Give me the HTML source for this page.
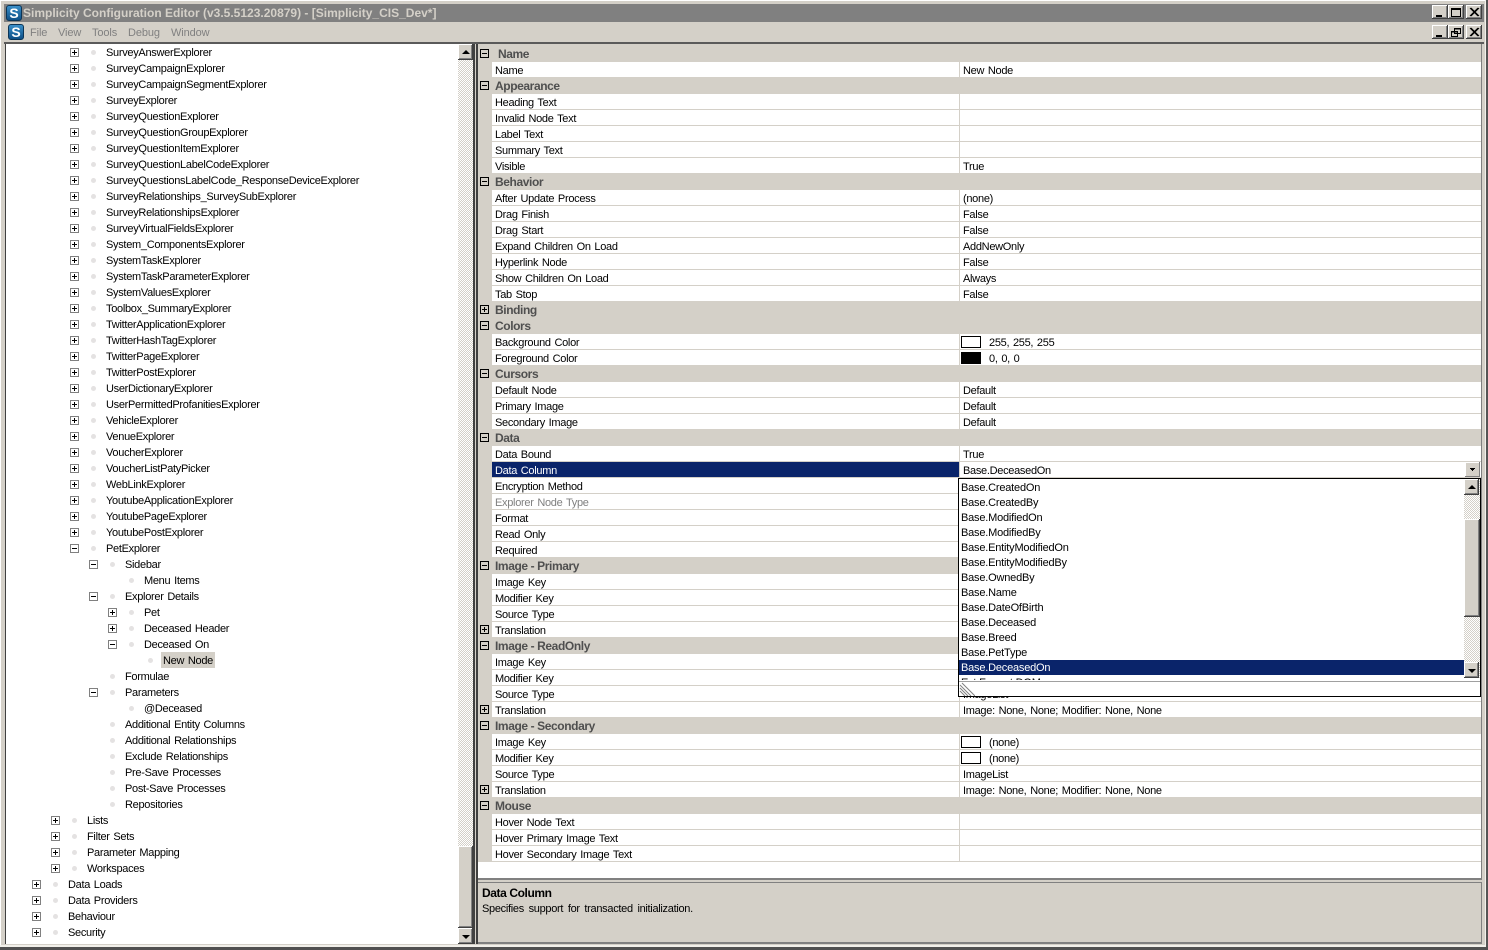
<!DOCTYPE html>
<html><head><meta charset="utf-8">
<style>
*{margin:0;padding:0;box-sizing:border-box}
html,body{width:1488px;height:950px;overflow:hidden;background:#d4d0c8;font:11px/16px "Liberation Sans",sans-serif;color:#000}
.a{position:absolute}
.btn{position:absolute;width:16px;height:14px;background:#d4d0c8;box-shadow:inset -1px -1px #404040,inset 1px 1px #fff,inset -2px -2px #808080}
.btn svg{position:absolute;left:0;top:0}
.logo{position:absolute;width:16px;height:16px;border-radius:3px;background:linear-gradient(#3a8fc8,#0d4f86);border:1px solid #0b3557;color:#fff;font:bold 14px/14px "Liberation Sans",sans-serif;text-align:center}
.menu{position:absolute;top:25px;color:#808080;letter-spacing:-.1px}
.t{height:16px;position:relative;white-space:nowrap;line-height:18px;letter-spacing:-.3px;word-spacing:1px}
.t i{position:absolute;top:4px;left:var(--x);width:9px;height:9px;border:1px solid #808080;background:linear-gradient(#000,#000) center/5px 1px no-repeat,#fff}
.t i.p{background:linear-gradient(#000,#000) center/5px 1px no-repeat,linear-gradient(#000,#000) center/1px 5px no-repeat,#fff}
.t b{position:absolute;top:6px;left:calc(var(--x) + 21px);width:5px;height:5px;border-radius:50%;background:#e4e2e2}
.l0{--x:32px;padding-left:68px}
.l1{--x:51px;padding-left:87px}
.l2{--x:70px;padding-left:106px}
.l3{--x:89px;padding-left:125px}
.l4{--x:108px;padding-left:144px}
.l5{--x:127px;padding-left:163px}
.sbtn{position:absolute;width:15px;height:16px;background:#d4d0c8;box-shadow:inset -1px -1px #404040,inset 1px 1px #fff,inset -2px -2px #808080}
.up:after,.dn:after{content:"";position:absolute;left:4px;border-left:4px solid transparent;border-right:4px solid transparent}
.up:after{top:6px;border-bottom:4px solid #000}
.dn:after{top:7px;border-top:4px solid #000}
.track{position:absolute;background:conic-gradient(#d4d0c8 25%,#fff 0 50%,#d4d0c8 0 75%,#fff 0) 0 0/2px 2px}
.thumb{position:absolute;width:15px;background:#d4d0c8;box-shadow:inset -1px -1px #404040,inset 1px 1px #fff,inset -2px -2px #808080}
.g p{height:16px;position:relative;white-space:nowrap;background:#d4d0c8;line-height:18px;letter-spacing:-.3px;word-spacing:1px}
.g p b,.g p em{position:absolute;top:0;height:16px;font-weight:normal;font-style:normal;background:#fff;border-bottom:1px solid #d4d0c8;overflow:hidden}
.g p b{left:14px;width:467px;padding-left:3px}
.g p em{left:482px;width:521px;padding-left:3px}
.g h4{height:16px;position:relative;font:bold 12px/16px "Liberation Sans",sans-serif;color:#4f4f4f;padding-left:17px;background:#d4d0c8;white-space:nowrap;letter-spacing:-.4px}
.g i{position:absolute;left:2px;top:3px;width:9px;height:9px;border:1px solid #000;background:linear-gradient(#000,#000) center/5px 1px no-repeat,#d4d0c8}
.g i.p{background:linear-gradient(#000,#000) center/5px 1px no-repeat,linear-gradient(#000,#000) center/1px 5px no-repeat,#d4d0c8}
.g p i{z-index:2}
.sw{position:absolute;left:1px;top:2px;width:20px;height:12px;border:1px solid #000;background:#fff}
.sv{padding-left:29px!important}
.dd div{height:15px;line-height:17px;padding-left:2px;white-space:nowrap;letter-spacing:-.2px}
</style></head><body>

<!-- window frame -->
<div class="a" style="left:0;top:0;width:1488px;height:3px;background:#d4d0c8;border-top:1px solid #fff"></div>
<div class="a" style="left:0;top:0;width:1px;height:950px;background:#fff"></div>
<div class="a" style="left:1486px;top:0;width:2px;height:950px;background:#555"></div>
<div class="a" style="left:1485px;top:0;width:1px;height:950px;background:#f2f0ea"></div>
<div class="a" style="left:0;top:947px;width:1488px;height:3px;background:#505050"></div>
<div class="a" style="left:0;top:945px;width:1486px;height:2px;background:#f2f0ea"></div>

<!-- title bar -->
<div class="a" style="left:4px;top:4px;width:1480px;height:18px;background:#808080"></div>
<div class="logo" style="left:6px;top:5px">S</div>
<div class="a" style="left:23px;top:5px;color:#d4d0c8;font-weight:bold;font-size:12px;line-height:17px;white-space:nowrap">Simplicity Configuration Editor (v3.5.5123.20879) - [Simplicity_CIS_Dev*]</div>
<div class="btn" style="left:1432px;top:5px"><svg width="16" height="14"><path d="M4 10h6v2H4z"/></svg></div>
<div class="btn" style="left:1448px;top:5px"><svg width="16" height="14"><path d="M3.5 3.5h9v8h-9z" fill="none" stroke="#000"/><path d="M3 3h10v2H3z"/></svg></div>
<div class="btn" style="left:1466px;top:5px"><svg width="16" height="14"><path d="M4 3l8 8M5 3l8 8M12 3l-8 8M13 3l-8 8" stroke="#000" stroke-width="1" fill="none"/></svg></div>

<!-- menu bar -->
<div class="logo" style="left:8px;top:24px">S</div>
<div class="menu" style="left:30px">File</div>
<div class="menu" style="left:58px">View</div>
<div class="menu" style="left:92px">Tools</div>
<div class="menu" style="left:128px">Debug</div>
<div class="menu" style="left:171px">Window</div>
<div class="btn" style="left:1432px;top:25px"><svg width="16" height="14"><path d="M4 10h6v2H4z"/></svg></div>
<div class="btn" style="left:1448px;top:25px"><svg width="16" height="14"><path d="M6.5 3.5h6v5h-6zM3.5 6.5h6v5h-6z" fill="#d4d0c8" stroke="#000"/><path d="M6 3h7v1.500H6zM3 6h7v1.500H3z"/></svg></div>
<div class="btn" style="left:1466px;top:25px"><svg width="16" height="14"><path d="M4 3l8 8M5 3l8 8M12 3l-8 8M13 3l-8 8" stroke="#000" stroke-width="1" fill="none"/></svg></div>
<div class="a" style="left:4px;top:42px;width:1480px;height:2px;background:#5a5a5a"></div>

<!-- tree -->
<div class="a" style="left:5px;top:44px;width:453px;height:900px;background:#fff;border-left:1px solid #404040"></div>
<div class="a" style="left:0;top:44px;width:458px;height:900px;overflow:hidden">
<div class="t l2"><i class="p"></i><b></b>SurveyAnswerExplorer</div>
<div class="t l2"><i class="p"></i><b></b>SurveyCampaignExplorer</div>
<div class="t l2"><i class="p"></i><b></b>SurveyCampaignSegmentExplorer</div>
<div class="t l2"><i class="p"></i><b></b>SurveyExplorer</div>
<div class="t l2"><i class="p"></i><b></b>SurveyQuestionExplorer</div>
<div class="t l2"><i class="p"></i><b></b>SurveyQuestionGroupExplorer</div>
<div class="t l2"><i class="p"></i><b></b>SurveyQuestionItemExplorer</div>
<div class="t l2"><i class="p"></i><b></b>SurveyQuestionLabelCodeExplorer</div>
<div class="t l2"><i class="p"></i><b></b>SurveyQuestionsLabelCode_ResponseDeviceExplorer</div>
<div class="t l2"><i class="p"></i><b></b>SurveyRelationships_SurveySubExplorer</div>
<div class="t l2"><i class="p"></i><b></b>SurveyRelationshipsExplorer</div>
<div class="t l2"><i class="p"></i><b></b>SurveyVirtualFieldsExplorer</div>
<div class="t l2"><i class="p"></i><b></b>System_ComponentsExplorer</div>
<div class="t l2"><i class="p"></i><b></b>SystemTaskExplorer</div>
<div class="t l2"><i class="p"></i><b></b>SystemTaskParameterExplorer</div>
<div class="t l2"><i class="p"></i><b></b>SystemValuesExplorer</div>
<div class="t l2"><i class="p"></i><b></b>Toolbox_SummaryExplorer</div>
<div class="t l2"><i class="p"></i><b></b>TwitterApplicationExplorer</div>
<div class="t l2"><i class="p"></i><b></b>TwitterHashTagExplorer</div>
<div class="t l2"><i class="p"></i><b></b>TwitterPageExplorer</div>
<div class="t l2"><i class="p"></i><b></b>TwitterPostExplorer</div>
<div class="t l2"><i class="p"></i><b></b>UserDictionaryExplorer</div>
<div class="t l2"><i class="p"></i><b></b>UserPermittedProfanitiesExplorer</div>
<div class="t l2"><i class="p"></i><b></b>VehicleExplorer</div>
<div class="t l2"><i class="p"></i><b></b>VenueExplorer</div>
<div class="t l2"><i class="p"></i><b></b>VoucherExplorer</div>
<div class="t l2"><i class="p"></i><b></b>VoucherListPatyPicker</div>
<div class="t l2"><i class="p"></i><b></b>WebLinkExplorer</div>
<div class="t l2"><i class="p"></i><b></b>YoutubeApplicationExplorer</div>
<div class="t l2"><i class="p"></i><b></b>YoutubePageExplorer</div>
<div class="t l2"><i class="p"></i><b></b>YoutubePostExplorer</div>
<div class="t l2"><i></i><b></b>PetExplorer</div>
<div class="t l3"><i></i><b></b>Sidebar</div>
<div class="t l4"><b></b>Menu Items</div>
<div class="t l3"><i></i><b></b>Explorer Details</div>
<div class="t l4"><i class="p"></i><b></b>Pet</div>
<div class="t l4"><i class="p"></i><b></b>Deceased Header</div>
<div class="t l4"><i></i><b></b>Deceased On</div>
<div class="t l5"><b></b><span style="background:#d4d0c8;margin-left:-2px;padding:0 2px;display:inline-block;height:16px">New Node</span></div>
<div class="t l3"><b></b>Formulae</div>
<div class="t l3"><i></i><b></b>Parameters</div>
<div class="t l4"><b></b>@Deceased</div>
<div class="t l3"><b></b>Additional Entity Columns</div>
<div class="t l3"><b></b>Additional Relationships</div>
<div class="t l3"><b></b>Exclude Relationships</div>
<div class="t l3"><b></b>Pre-Save Processes</div>
<div class="t l3"><b></b>Post-Save Processes</div>
<div class="t l3"><b></b>Repositories</div>
<div class="t l1"><i class="p"></i><b></b>Lists</div>
<div class="t l1"><i class="p"></i><b></b>Filter Sets</div>
<div class="t l1"><i class="p"></i><b></b>Parameter Mapping</div>
<div class="t l1"><i class="p"></i><b></b>Workspaces</div>
<div class="t l0"><i class="p"></i><b></b>Data Loads</div>
<div class="t l0"><i class="p"></i><b></b>Data Providers</div>
<div class="t l0"><i class="p"></i><b></b>Behaviour</div>
<div class="t l0"><i class="p"></i><b></b>Security</div>
</div>

<!-- tree scrollbar -->
<div class="track" style="left:458px;top:44px;width:15px;height:899px"></div>
<div class="sbtn up" style="left:458px;top:44px"></div>
<div class="thumb" style="left:458px;top:846px;height:82px"></div>
<div class="sbtn dn" style="left:458px;top:928px"></div>

<!-- splitter -->
<div class="a" style="left:473px;top:44px;width:2px;height:900px;background:#404040"></div>
<div class="a" style="left:476px;top:44px;width:2px;height:900px;background:#404040"></div>

<!-- property grid -->
<div class="a" style="left:478px;top:44px;width:1004px;height:836px;background:#fff;border-right:1px solid #808080;border-bottom:2px solid #808080"></div>
<div class="a" style="left:478px;top:44px;width:1003px;height:2px;background:#d4d0c8"></div>
<div class="a" style="left:478px;top:46px;width:14px;height:816px;background:#d4d0c8"></div>
<div class="a g" style="left:478px;top:46px;width:1003px">
<h4 style="padding-left:20px"><i></i>Name</h4>
<p><b>Name</b><em>New Node</em></p>
<h4><i></i>Appearance</h4>
<p><b>Heading Text</b><em></em></p>
<p><b>Invalid Node Text</b><em></em></p>
<p><b>Label Text</b><em></em></p>
<p><b>Summary Text</b><em></em></p>
<p><b>Visible</b><em>True</em></p>
<h4><i></i>Behavior</h4>
<p><b>After Update Process</b><em>(none)</em></p>
<p><b>Drag Finish</b><em>False</em></p>
<p><b>Drag Start</b><em>False</em></p>
<p><b>Expand Children On Load</b><em>AddNewOnly</em></p>
<p><b>Hyperlink Node</b><em>False</em></p>
<p><b>Show Children On Load</b><em>Always</em></p>
<p><b>Tab Stop</b><em>False</em></p>
<h4><i class="p"></i>Binding</h4>
<h4><i></i>Colors</h4>
<p><b>Background Color</b><em class="sv"><span class="sw"></span>255, 255, 255</em></p>
<p><b>Foreground Color</b><em class="sv"><span class="sw" style="background:#000"></span>0, 0, 0</em></p>
<h4><i></i>Cursors</h4>
<p><b>Default Node</b><em>Default</em></p>
<p><b>Primary Image</b><em>Default</em></p>
<p><b>Secondary Image</b><em>Default</em></p>
<h4><i></i>Data</h4>
<p><b>Data Bound</b><em>True</em></p>
<p><b style="background:#0a246a;color:#fff">Data Column</b><em>Base.DeceasedOn</em></p>
<p><b>Encryption Method</b><em></em></p>
<p><b style="color:#808080">Explorer Node Type</b><em></em></p>
<p><b>Format</b><em></em></p>
<p><b>Read Only</b><em></em></p>
<p><b>Required</b><em></em></p>
<h4><i></i>Image - Primary</h4>
<p><b>Image Key</b><em></em></p>
<p><b>Modifier Key</b><em></em></p>
<p><b>Source Type</b><em></em></p>
<p><i class="p"></i><b>Translation</b><em></em></p>
<h4><i></i>Image - ReadOnly</h4>
<p><b>Image Key</b><em></em></p>
<p><b>Modifier Key</b><em></em></p>
<p><b>Source Type</b><em>ImageList</em></p>
<p><i class="p"></i><b>Translation</b><em>Image: None, None; Modifier: None, None</em></p>
<h4><i></i>Image - Secondary</h4>
<p><b>Image Key</b><em class="sv"><span class="sw"></span>(none)</em></p>
<p><b>Modifier Key</b><em class="sv"><span class="sw"></span>(none)</em></p>
<p><b>Source Type</b><em>ImageList</em></p>
<p><i class="p"></i><b>Translation</b><em>Image: None, None; Modifier: None, None</em></p>
<h4><i></i>Mouse</h4>
<p><b>Hover Node Text</b><em></em></p>
<p><b>Hover Primary Image Text</b><em></em></p>
<p><b>Hover Secondary Image Text</b><em></em></p>
</div>

<!-- value dropdown button -->
<div class="sbtn" style="left:1465px;top:462px;height:15px;box-shadow:inset -1px -1px #808080,inset 1px 1px #fff"><svg class="a" style="left:0;top:0" width="15" height="15"><path d="M5 6h5v1H9v1H8v1H7V8H6V7H5z"/></svg></div>

<!-- dropdown list -->
<div class="a" style="left:958px;top:478px;width:523px;height:219px;background:#fff;border:1px solid #000"></div>
<div class="a dd" style="left:959px;top:480px;width:505px;height:201px;overflow:hidden">
<div>Base.CreatedOn</div>
<div>Base.CreatedBy</div>
<div>Base.ModifiedOn</div>
<div>Base.ModifiedBy</div>
<div>Base.EntityModifiedOn</div>
<div>Base.EntityModifiedBy</div>
<div>Base.OwnedBy</div>
<div>Base.Name</div>
<div>Base.DateOfBirth</div>
<div>Base.Deceased</div>
<div>Base.Breed</div>
<div>Base.PetType</div>
<div style="background:#0a246a;color:#fff">Base.DeceasedOn</div>
<div>Ext.Format.DOM</div>
</div>
<div class="a" style="left:959px;top:680px;width:521px;height:1px;background:#fff"></div>
<div class="a" style="left:959px;top:681px;width:521px;height:1px;background:#a0a0a0"></div>
<svg class="a" style="left:959px;top:682px" width="16" height="14"><path d="M1 3l11 11M1 6l8 8M1 9l5 5M3 1l13 13" stroke="#808080" fill="none"/></svg>
<div class="track" style="left:1464px;top:479px;width:16px;height:199px"></div>
<div class="sbtn up" style="left:1464px;top:479px"></div>
<div class="thumb" style="left:1464px;top:519px;height:98px;width:16px"></div>
<div class="sbtn dn" style="left:1464px;top:662px"></div>

<!-- help pane -->
<div class="a" style="left:478px;top:882px;width:1004px;height:62px;background:#d4d0c8;border:1px solid #808080;border-width:1px 1px 2px 0"></div>
<div class="a" style="left:482px;top:885px;font-weight:bold;font-size:12px;white-space:nowrap;letter-spacing:-.4px">Data Column</div>
<div class="a" style="left:482px;top:901px;white-space:nowrap;letter-spacing:-.3px;word-spacing:1.9px">Specifies support for transacted initialization.</div>
</body></html>
